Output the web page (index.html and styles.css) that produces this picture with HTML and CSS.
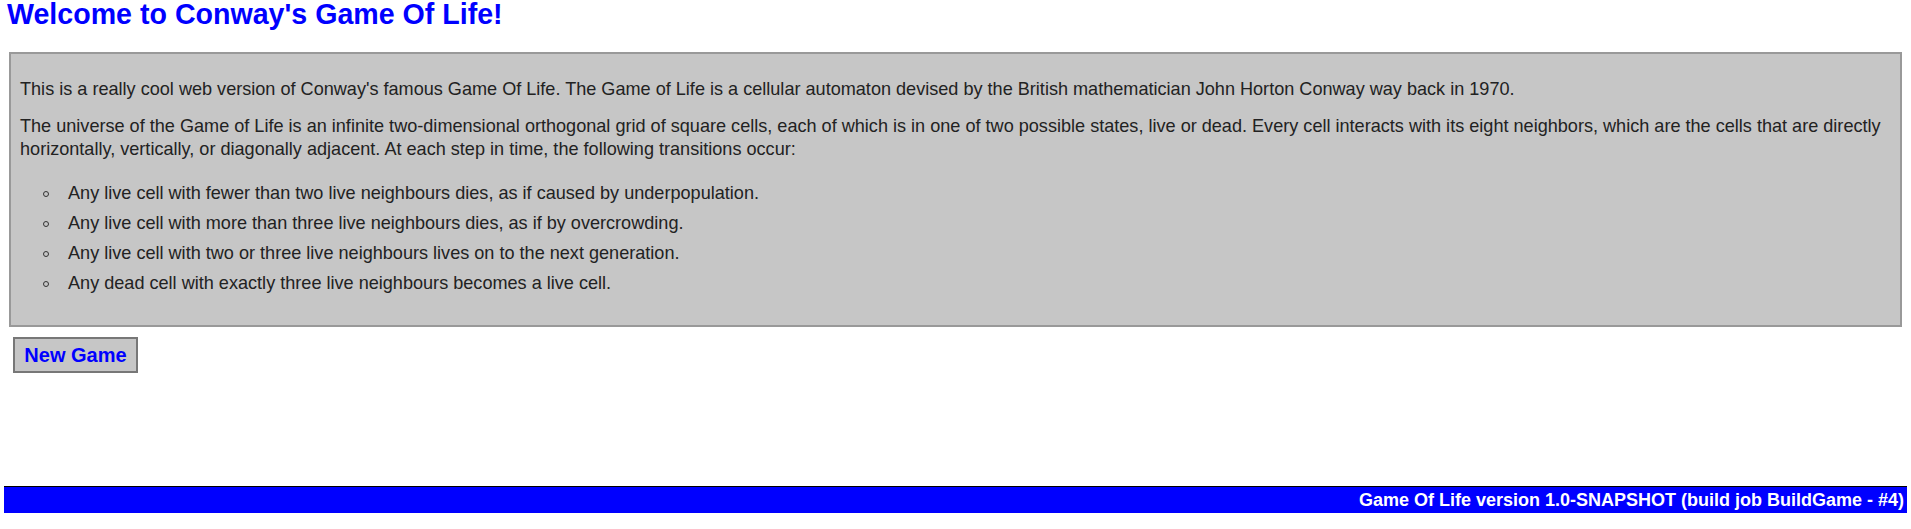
FILE: index.html
```html
<!DOCTYPE html>
<html>
<head>
<meta charset="utf-8">
<title>Conway's Game Of Life</title>
<link rel="stylesheet" href="styles.css">
</head>
<body>
<div class="page">
  <h1 class="title">Welcome to Conway's Game Of Life!</h1>
  <div class="intro">
    <p>This is a really cool web version of Conway's famous Game Of Life. The Game of Life is a cellular automaton devised by the British mathematician John Horton Conway way back in 1970.</p>
    <p>The universe of the Game of Life is an infinite two-dimensional orthogonal grid of square cells, each of which is in one of two possible states, live or dead. Every cell interacts with its eight neighbors, which are the cells that are directly horizontally, vertically, or diagonally adjacent. At each step in time, the following transitions occur:</p>
    <ul class="rules">
      <li>Any live cell with fewer than two live neighbours dies, as if caused by underpopulation.</li>
      <li>Any live cell with more than three live neighbours dies, as if by overcrowding.</li>
      <li>Any live cell with two or three live neighbours lives on to the next generation.</li>
      <li>Any dead cell with exactly three live neighbours becomes a live cell.</li>
    </ul>
  </div>
  <div class="actions">
    <button class="new-game" type="button">New Game</button>
  </div>
  <div class="spacer"></div>
  <div class="footer">Game Of Life version 1.0-SNAPSHOT (build job BuildGame - #4)</div>
</div>
</body>
</html>
```
FILE: styles.css
```css
html, body {
  margin: 0;
  padding: 0;
  background: #ffffff;
}

body {
  font-family: "Liberation Sans", Arial, sans-serif;
  color: #222222;
}

.page {
  padding: 0 4px;
  display: flex;
  flex-direction: column;
}

.title {
  margin: 0 0 24px 0;
  padding-left: 3px;
  font-size: 28.6px;
  line-height: 28px;
  font-weight: bold;
  color: #0000ff;
}

.intro {
  margin: 0 5px;
  padding: 10px 9px;
  background: #c6c6c6;
  border: 2px solid #999999;
  font-size: 18.1px;
  line-height: 23px;
}

.intro p {
  margin: 14px 0;
}

.rules {
  margin: 21px 0 20px 0;
  padding-left: 48px;
  list-style: none;
}

.rules li {
  margin-bottom: 7px;
}

.rules li::before {
  content: "";
  display: inline-block;
  width: 4px;
  height: 4px;
  border: 1px solid #333333;
  border-radius: 50%;
  margin-left: -25px;
  margin-right: 19px;
  vertical-align: middle;
}

.rules li:last-child {
  margin-bottom: 0;
}

.actions {
  margin-top: 10px;
  padding-left: 9px;
  display: flex;
}

.new-game {
  width: 125px;
  height: 36px;
  padding: 0;
  background: #c6c6c6;
  border: 2px solid #777777;
  color: #0000ff;
  font-family: "Liberation Sans", Arial, sans-serif;
  font-size: 20px;
  font-weight: bold;
}

.spacer {
  height: 113px;
}

.footer {
  height: 26px;
  border-top: 1px solid #000000;
  background: #0000ff;
  color: #ffffff;
  font-size: 18px;
  font-weight: bold;
  line-height: 26px;
  text-align: right;
  padding-right: 3px;
}
```
